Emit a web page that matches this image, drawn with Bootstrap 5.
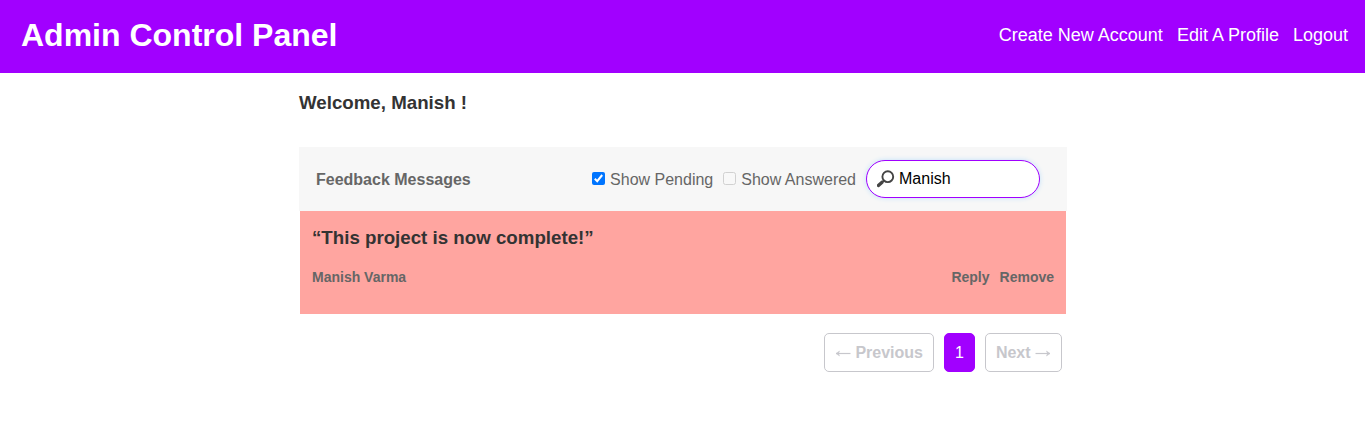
<!DOCTYPE html>
<html lang="en">
<head>
<meta charset="utf-8">
<meta name="viewport" content="width=device-width, initial-scale=1">
<title>Admin Control Panel</title>
<link href="https://cdn.jsdelivr.net/npm/bootstrap@5.3.0/dist/css/bootstrap.min.css" rel="stylesheet">
<style>
body{font-family:"Liberation Sans",Arial,sans-serif;font-size:16px;line-height:24px;color:#666}
.topbar{background:#a100ff;height:73px;padding:0 17px 3px 21px}
.topbar h1{font-size:32px;font-weight:700;line-height:40px}
.topbar nav{gap:14px}
.topbar a{font-size:18px;color:#fff}
.panel-wrap{width:768px;padding-left:1px;box-sizing:content-box}
.welcome{font-size:18.72px;font-weight:700;line-height:24px;color:#333;padding-top:18px;margin-bottom:32px}
.filterbar{background:#f7f7f7;height:64px;padding:0 27px 0 17px}
.filterbar strong{padding-top:1px}
.check-item{padding-top:1px}
.check-item + .check-item{margin-left:10px}
.tick{width:13px;height:13px;margin:-3px 5px 0 0;flex:none}
.search-pill{width:174px;height:38px;border:1px solid #a100ff;border-radius:19px;box-shadow:0 0 5px #bfe0fa;padding-left:10px;margin-left:10px}
.search-pill svg{width:18px;height:18px;margin-right:4px;flex:none}
.search-pill input{width:120px;color:#000;outline:0}
.message{background:#ffa5a0;height:103px;margin:0 1px;padding:15px 12px 0}
.message h2{font-size:18.72px;font-weight:700;line-height:24px;color:#333;margin-bottom:17px}
.message-foot{font-size:14px;font-weight:700;line-height:20px;gap:10px}
.pager{padding-right:5px;margin-top:19px;gap:10px}
.pager a{height:39px;border:1px solid #c7c7cc;border-radius:5px;padding:0 10px;line-height:37px;color:#c7c7cc;font-weight:700;white-space:nowrap}
.pager .current{background:#a100ff;border-color:#a100ff;color:#fff;font-weight:400}
.arrow{width:16px;height:9px;fill:currentColor;stroke:currentColor;stroke-width:1.2;vertical-align:0}
</style>
</head>
<body>
<header class="topbar d-flex align-items-center justify-content-between text-white">
  <h1 class="m-0">Admin Control Panel</h1>
  <nav class="d-flex">
    <a class="text-decoration-none" href="#">Create New Account</a>
    <a class="text-decoration-none" href="#">Edit A Profile</a>
    <a class="text-decoration-none" href="#">Logout</a>
  </nav>
</header>
<main class="panel-wrap mx-auto">
  <p class="welcome">Welcome, Manish !</p>
  <section>
    <div class="filterbar d-flex align-items-center">
      <strong class="me-auto">Feedback Messages</strong>
      <span class="check-item d-flex align-items-center">
        <svg class="tick" viewBox="0 0 13 13"><rect width="13" height="13" rx="2" fill="#0075ff"/><path d="M2.8 6.8 5.2 9.2 10.2 3" fill="none" stroke="#fff" stroke-width="2"/></svg>Show Pending
      </span>
      <span class="check-item d-flex align-items-center">
        <svg class="tick" viewBox="0 0 13 13"><rect x=".5" y=".5" width="12" height="12" rx="2" fill="#f8f8f8" stroke="#d1d1d1"/></svg>Show Answered
      </span>
      <label class="search-pill d-flex align-items-center bg-white">
        <svg viewBox="0 0 18 18" fill="none" stroke="#444"><circle cx="10.8" cy="6.7" r="5.4" stroke-width="1.9"/><path d="M7 10.4 5.2 12.2" stroke-width="2"/><path d="M4.8 12.4 1.4 15.4" stroke-width="3.4" stroke-linecap="round"/></svg>
        <input class="border-0 p-0 bg-transparent" type="text" value="Manish" aria-label="Search">
      </label>
    </div>
    <article class="message">
      <h2>“This project is now complete!”</h2>
      <div class="message-foot d-flex">
        <span class="me-auto">Manish Varma</span>
        <span>Reply</span>
        <span>Remove</span>
      </div>
    </article>
  </section>
  <nav class="pager d-flex justify-content-end" aria-label="Pages">
    <a class="text-decoration-none" href="#"><svg class="arrow" viewBox="0 0 16 9"><path d="M15.5 4.5H1"/><path d="M4.5 2 1 4.5 4.5 7 3.5 4.5z" stroke-width=".5"/></svg> Previous</a>
    <a class="current text-decoration-none" href="#">1</a>
    <a class="text-decoration-none" href="#">Next <svg class="arrow" viewBox="0 0 16 9"><path d="M.5 4.5H15"/><path d="M11.5 2 15 4.5 11.5 7l1-2.5z" stroke-width=".5"/></svg></a>
  </nav>
</main>
<script src="https://cdn.jsdelivr.net/npm/bootstrap@5.3.0/dist/js/bootstrap.bundle.min.js"></script>
</body>
</html>
